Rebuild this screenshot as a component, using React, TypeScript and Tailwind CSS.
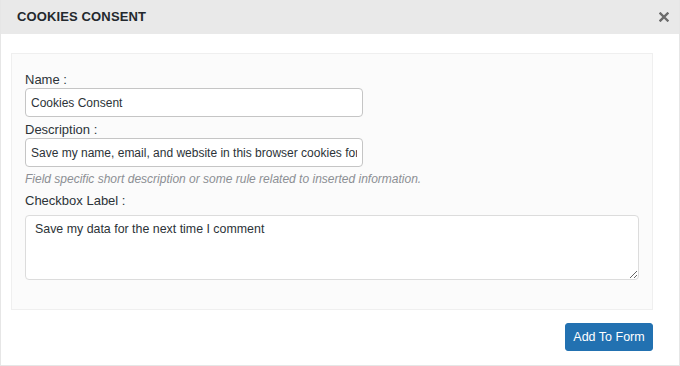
import React from 'react';

const font = { fontFamily: '"Liberation Sans", Arial, sans-serif' };

function CloseIcon() {
  return (
    <svg width="10" height="10" viewBox="0 0 10 10" className="text-[#6b6b6b]">
      <path d="M1.5 1.5 L8.5 8.5 M8.5 1.5 L1.5 8.5" stroke="currentColor" strokeWidth="2.4" strokeLinecap="square" />
    </svg>
  );
}

function Label({ children }: { children: React.ReactNode }) {
  return <div className="h-[17px] text-[13px] leading-[17px] text-[#2c3338]">{children}</div>;
}

export default function App() {
  return (
    <div
      className="flex h-[366px] w-[680px] flex-col border-x border-b border-[#e6e6e6] bg-white"
      style={font}
    >
      <div className="flex h-[34px] shrink-0 items-center justify-between bg-[#e9e9e9] pr-[10px] pl-4">
        <h1 className="text-[13px] font-bold tracking-[0.01em] text-[#23282d]">COOKIES CONSENT</h1>
        <CloseIcon />
      </div>

      <div className="mt-[19px] ml-[10px] w-[642px] border border-[#efefef] bg-[#fbfbfb] pt-[17px] pr-[12px] pb-[29px] pl-[13px]">
        <Label>Name :</Label>
        <input
          readOnly
          defaultValue="Cookies Consent"
          className="block h-[29px] w-[338px] rounded-[4px] border border-[#c5c5c5] bg-white px-[5px] text-[12px] text-[#2c3338] outline-none"
        />

        <div className="mt-[4px]">
          <Label>Description :</Label>
        </div>
        <input
          readOnly
          defaultValue="Save my name, email, and website in this browser cookies for the next time I comment."
          className="block h-[29px] w-[338px] rounded-[4px] border border-[#c5c5c5] bg-white px-[5px] text-[12px] text-[#2c3338] outline-none"
        />
        <p className="mt-[4px] h-[17px] text-[12px] leading-[17px] text-[#8c8f94] italic">
          Field specific short description or some rule related to inserted information.
        </p>

        <div className="mt-[4px] mb-[6px]">
          <Label>Checkbox Label :</Label>
        </div>
        <textarea
          readOnly
          defaultValue="Save my data for the next time I comment"
          className="block h-[65px] w-[614px] rounded-[4px] border border-[#dcdcdc] bg-white pt-[4px] pr-[5px] pl-[9px] text-[12.4px] leading-[18px] text-[#2c3338] outline-none"
        />
      </div>

      <div className="mt-[13px] flex w-[652px] justify-end">
        <button className="h-[28px] w-[88px] rounded-[3px] border border-[#2271b1] bg-[#2271b1] text-[12.5px] font-medium text-white">
          Add To Form
        </button>
      </div>
    </div>
  );
}
